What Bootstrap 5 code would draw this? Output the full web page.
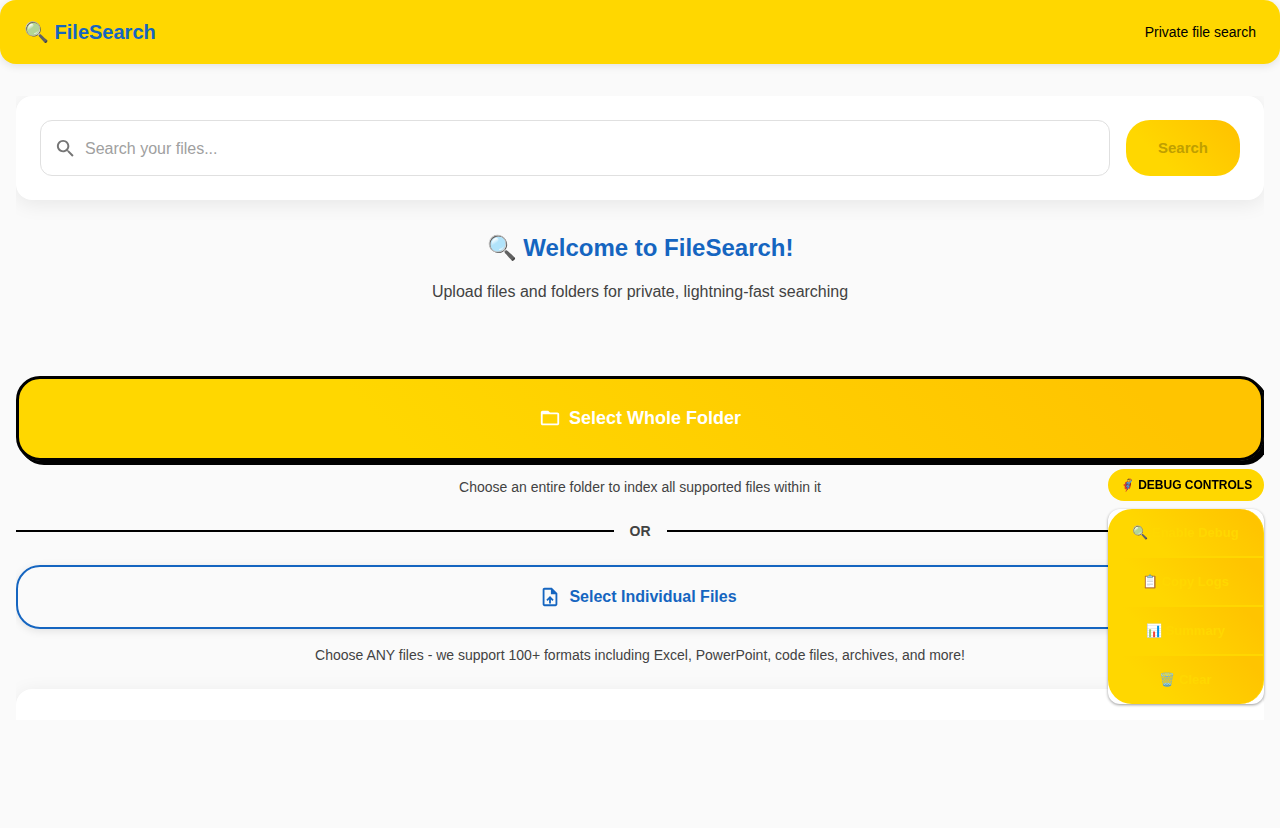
<!DOCTYPE html>
<html lang="en">
<head>
<meta charset="utf-8">
<meta name="viewport" content="width=device-width, initial-scale=1">
<title>FileSearch</title>
<link href="https://cdn.jsdelivr.net/npm/bootstrap@5.3.0/dist/css/bootstrap.min.css" rel="stylesheet">
<style>
  :root { --gold: #ffd700; --amber: #ffc400; --brand: #1565c0; --ink: #424242; }
  body { background: #fafafa; color: var(--ink); font-family: "Liberation Sans", Arial, sans-serif; font-size: 16px; line-height: 24px; }
  .app-bar { background: var(--gold); min-height: 64px; border-radius: 16px; box-shadow: 0 2px 8px rgba(0,0,0,.1); }
  .app-bar a, h1 { color: var(--brand); font-weight: 700; }
  .app-bar a { font-size: 20px; }
  .tagline { font-size: 14px; color: #000; }
  .page-body { margin: 32px 16px 0; overflow: hidden; }
  .panel { background: #fff; border-radius: 16px; box-shadow: 0 4px 20px rgba(0,0,0,.08); }
  .search-box { height: 56px; border: 1px solid #e0e0e0; border-radius: 12px; padding: 0 13px; background: #fff; }
  .search-box input { height: 26px; padding: 2px 0 0; border: 0; outline: 0; background: transparent; color: var(--ink); }
  .search-box input::placeholder { color: #a0a0a0; opacity: 1; }
  .gold-btn { background: linear-gradient(45deg, var(--gold) 30%, var(--amber) 90%); }
  .search-btn { border: 0; border-radius: 24px; padding: 0 32px; font-size: 15px; font-weight: 700; color: #bf9f00; }
  h1 { font-size: 24px; line-height: 32px; }
  .big-btn { border-radius: 24px; font-weight: 700; }
  .folder-btn { height: 85px; padding-bottom: 3px; border: 3px solid #000; color: #fff; font-size: 18px; box-shadow: 1px 1px 0 #000, 2px 2px 0 #000, 3px 3px 0 #000, 4px 4px 0 #000; }
  .files-btn { height: 64px; padding-right: 10px; border: 2px solid var(--brand); color: var(--brand); background: transparent; font-size: 16px; box-shadow: 0 2px 8px rgba(0,0,0,.1); }
  .hint { font-size: 14px; line-height: 20px; }
  .or-rule { height: 2px; background: #000; }
  .next-panel { height: 31px; border-radius: 16px 16px 0 0; }
  .debug-dock { position: fixed; right: 16px; bottom: 124px; width: 156px; }
  .debug-title { height: 32px; border-radius: 16px; background: var(--gold); color: #000; font-size: 12px; font-weight: 700; }
  .debug-menu { border-radius: 12px; box-shadow: 0 1px 3px rgba(0,0,0,.4); }
  .debug-menu button { height: 49px; border: 0 solid var(--gold); border-width: 0 1px 2px 0; font-size: 13px; font-weight: 700; color: var(--gold); }
  .debug-menu button:first-child { border-radius: 24px 24px 0 0; }
  .debug-menu button:last-child { border-radius: 0 0 24px 24px; height: 48px; border-bottom: 0; }
  .debug-menu .glyph { color: #000; }
</style>
</head>
<body>
<header class="app-bar d-flex align-items-center justify-content-between px-4">
  <a href="#" class="text-decoration-none">🔍 FileSearch</a>
  <span class="tagline">Private file search</span>
</header>

<main class="page-body">
  <form class="panel d-flex gap-3 p-4">
    <label class="search-box d-flex align-items-center flex-grow-1 gap-2">
      <svg width="23" height="23" viewBox="0 0 24 24" fill="#757575" aria-hidden="true"><path d="M15.5 14h-.79l-.28-.27C15.41 12.59 16 11.11 16 9.500 16 5.910 13.090 3 9.500 3S3 5.910 3 9.500 5.910 16 9.500 16c1.610 0 3.090-.59 4.230-1.570l.27.28v.79l5 4.990L20.490 19l-4.990-5zm-6 0C7.010 14 5 11.990 5 9.500S7.010 5 9.500 5 14 7.010 14 9.500 11.990 14 9.500 14z"/></svg>
      <input type="text" class="flex-grow-1" placeholder="Search your files..." aria-label="Search your files">
    </label>
    <button type="submit" class="gold-btn search-btn">Search</button>
  </form>

  <section class="text-center mt-4 pt-2">
    <h1 class="mb-3">🔍 Welcome to FileSearch!</h1>
    <p class="mb-5">Upload files and folders for private, lightning-fast searching</p>
  </section>

  <section class="text-center pt-4">
    <button type="button" class="gold-btn big-btn folder-btn w-100 d-flex align-items-center justify-content-center gap-2">
      <svg width="22" height="22" viewBox="0 0 24 24" fill="currentColor" aria-hidden="true"><path d="M20 6h-8l-2-2H4c-1.100 0-1.990.9-1.990 2L2 18c0 1.100.9 2 2 2h16c1.100 0 2-.9 2-2V8c0-1.100-.9-2-2-2zm0 12H4V8h16v10z"/></svg>
      Select Whole Folder
    </button>
    <p class="hint mt-3 mb-4">Choose an entire folder to index all supported files within it</p>
    <div class="d-flex align-items-center gap-3 mb-4">
      <div class="or-rule flex-grow-1"></div>
      <span class="hint fw-bold">OR</span>
      <div class="or-rule flex-grow-1"></div>
    </div>
    <button type="button" class="big-btn files-btn w-100 d-flex align-items-center justify-content-center gap-2">
      <svg width="22" height="22" viewBox="0 0 24 24" fill="currentColor" aria-hidden="true"><path fill-rule="evenodd" d="M14 2H6c-1.100 0-2 .9-2 2v16c0 1.100.9 2 2 2h12c1.100 0 2-.9 2-2V8l-6-6zm4 18H6V4h7v5h5v11zM8 15.010l1.410 1.410L11 14.840V19h2v-4.160l1.590 1.590L16 15.010 12.010 11 8 15.010z"/></svg>
      Select Individual Files
    </button>
    <p class="hint mt-3 mb-4">Choose ANY files - we support 100+ formats including Excel, PowerPoint, code files, archives, and more!</p>
  </section>
  <div class="panel next-panel"></div>
</main>

<aside class="debug-dock d-flex flex-column gap-2">
  <div class="debug-title d-flex align-items-center justify-content-center">🦸‍♂️ DEBUG CONTROLS</div>
  <div class="debug-menu d-flex flex-column bg-white">
    <button type="button" class="gold-btn"><span class="glyph">🔍</span> Enable Debug</button>
    <button type="button" class="gold-btn"><span class="glyph">📋</span> Copy Logs</button>
    <button type="button" class="gold-btn"><span class="glyph">📊</span> Summary</button>
    <button type="button" class="gold-btn"><span class="glyph">🗑️</span> Clear</button>
  </div>
</aside>
<script src="https://cdn.jsdelivr.net/npm/bootstrap@5.3.0/dist/js/bootstrap.bundle.min.js"></script>
</body>
</html>
